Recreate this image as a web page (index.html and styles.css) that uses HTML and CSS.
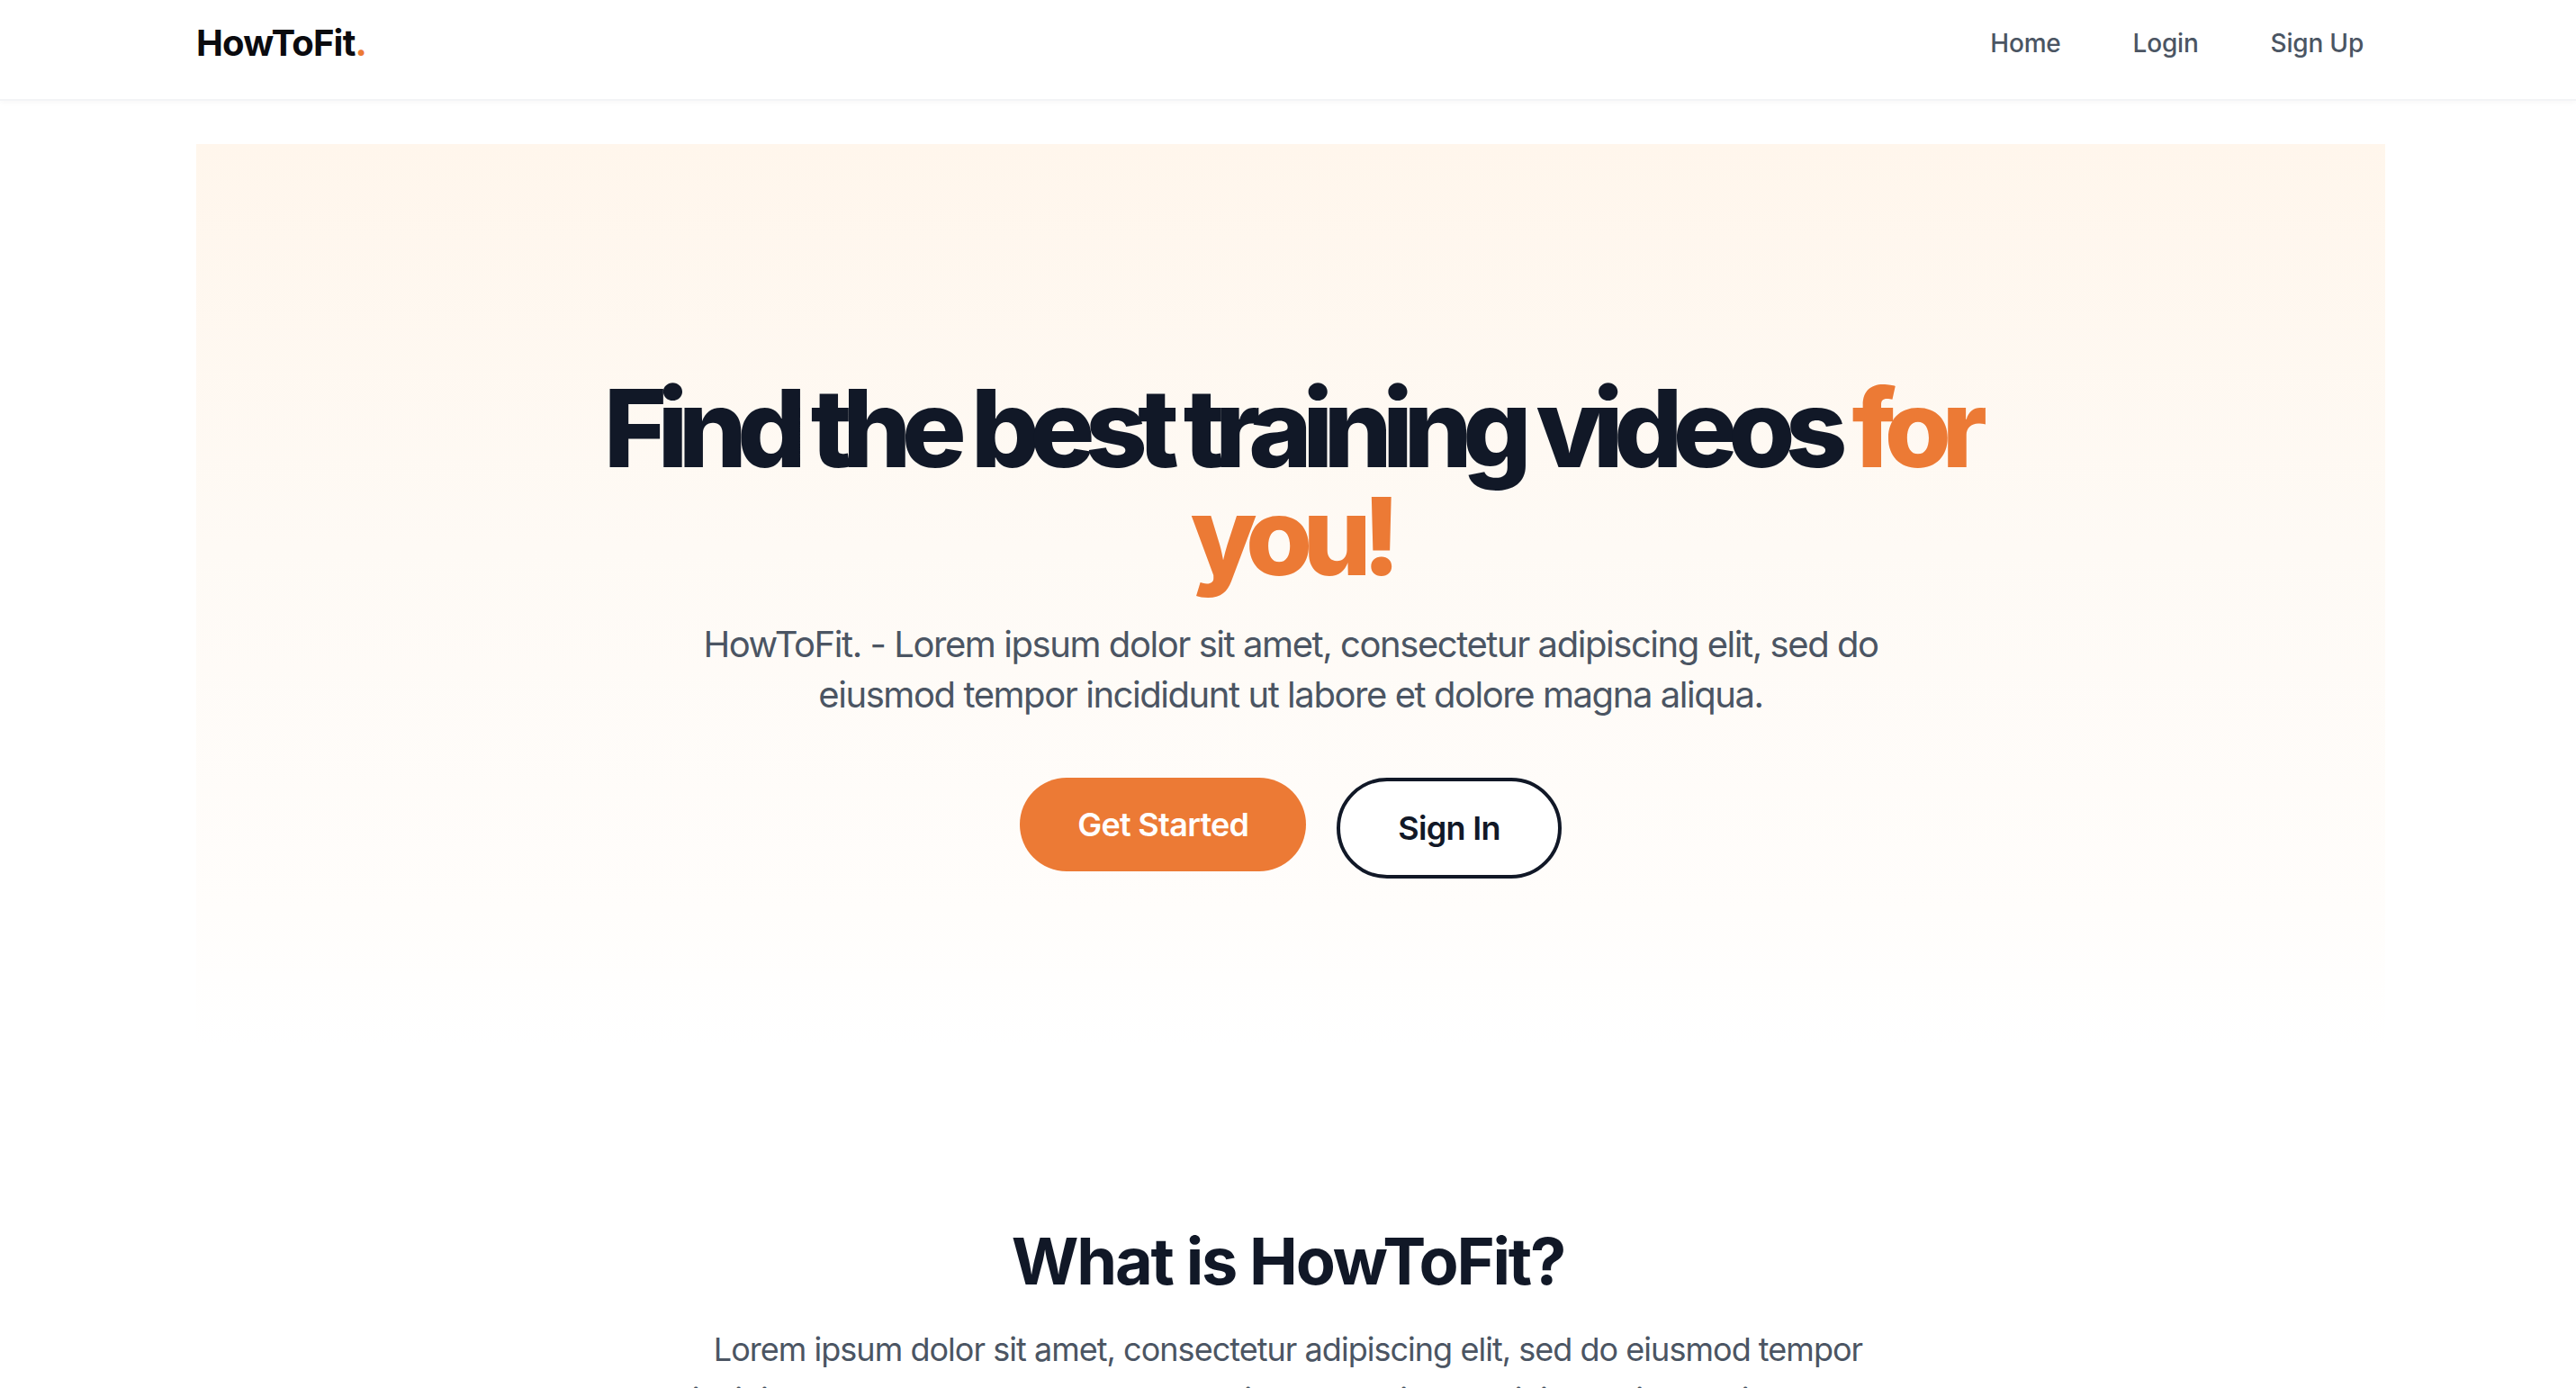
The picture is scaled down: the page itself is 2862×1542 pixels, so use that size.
FILE: index.html
```
<!DOCTYPE html>
<html lang="en">
<head>
<meta charset="utf-8">
<title>HowToFit.</title>
<link rel="stylesheet" href="styles.css">
</head>
<body>
<header class="site-header">
  <div class="container header-inner">
    <a class="logo" href="#">HowToFit<span class="accent">.</span></a>
    <nav class="nav">
      <a class="nav-link" href="#">Home</a>
      <a class="nav-link" href="#">Login</a>
      <a class="nav-link" href="#">Sign Up</a>
    </nav>
  </div>
</header>
<main>
  <div class="container">
    <section class="hero">
      <h1 class="hero-title">Find the best training videos <span class="accent">for you!</span></h1>
      <p class="hero-text">HowToFit. - Lorem ipsum dolor sit amet, consectetur adipiscing elit, sed do eiusmod tempor incididunt ut labore et dolore magna aliqua.</p>
      <div class="hero-actions">
        <a class="btn btn-primary" href="#">Get Started</a>
        <a class="btn btn-outline" href="#">Sign In</a>
      </div>
    </section>
  </div>
  <section class="about">
    <h2 class="about-title">What is HowToFit?</h2>
    <p class="about-text">Lorem ipsum dolor sit amet, consectetur adipiscing elit, sed do eiusmod tempor incididunt ut labore et dolore magna aliqua. Ut enim ad minim veniam, quis nostrud exercitation ullamco laboris.</p>
  </section>
</main>
</body>
</html>
```
FILE: styles.css
```
* { box-sizing: border-box; }
html, body { margin: 0; padding: 0; background: #ffffff; }
body {
  font-family: Inter, "Noto Sans", "Liberation Sans", sans-serif;
  color: #111827;
  overflow: hidden;
}
a { text-decoration: none; color: inherit; }

.container {
  width: 2432px;
  margin: 0 auto;
  position: relative;
  left: 3px;
}

.site-header {
  height: 112px;
  border-bottom: 2px solid #f3f4f6;
  box-shadow: 0 2px 6px rgba(0, 0, 0, 0.03);
  background: #fff;
}
.header-inner {
  height: 96px;
  display: flex;
  align-items: center;
  justify-content: space-between;
}
.logo {
  font-size: 40px;
  line-height: 56px;
  font-weight: 700;
  color: #0b0b0f;
  letter-spacing: -0.8px;
}
.accent { color: #ec7a35; }

.nav { display: flex; gap: 32px; }
.nav-link {
  font-size: 28px;
  line-height: 40px;
  font-weight: 500;
  color: #4b5563;
  padding: 0 24px;
  letter-spacing: -0.2px;
}

.hero {
  margin-top: 48px;
  padding: 256px 0 184px;
  background: linear-gradient(to bottom, #fff6ec 0%, #fefaf5 45%, #fffdfb 85%, #ffffff 100%);
  text-align: center;
}
.hero-title {
  margin: 0 auto;
  max-width: 1700px;
  font-size: 120px;
  line-height: 120px;
  font-weight: 800;
  letter-spacing: -0.089em;
  color: #111827;
}
.hero-text {
  margin: 32px auto 0;
  max-width: 1344px;
  font-size: 40px;
  line-height: 56px;
  color: #4b5563;
  letter-spacing: -0.036em;
}
.hero-actions {
  margin-top: 64px;
  display: flex;
  justify-content: center;
  align-items: flex-start;
  gap: 34px;
}
.btn {
  display: inline-block;
  border-radius: 9999px;
  padding: 24px 64px;
  font-size: 36px;
  line-height: 56px;
  font-weight: 600;
  letter-spacing: -0.02em;
}
.btn-primary { background: #ec7a35; color: #ffffff; }
.btn-outline { border: 4px solid #111827; color: #111827; background: #ffffff; }

.about {
  padding-top: 201px;
  text-align: center;
}
.about-title {
  margin: 0;
  font-size: 72px;
  line-height: 80px;
  font-weight: 700;
  color: #111827;
  letter-spacing: -0.03em;
}
.about-text {
  margin: 30px auto 0;
  max-width: 1344px;
  font-size: 36px;
  line-height: 56px;
  color: #4b5563;
  letter-spacing: -0.027em;
}
```
